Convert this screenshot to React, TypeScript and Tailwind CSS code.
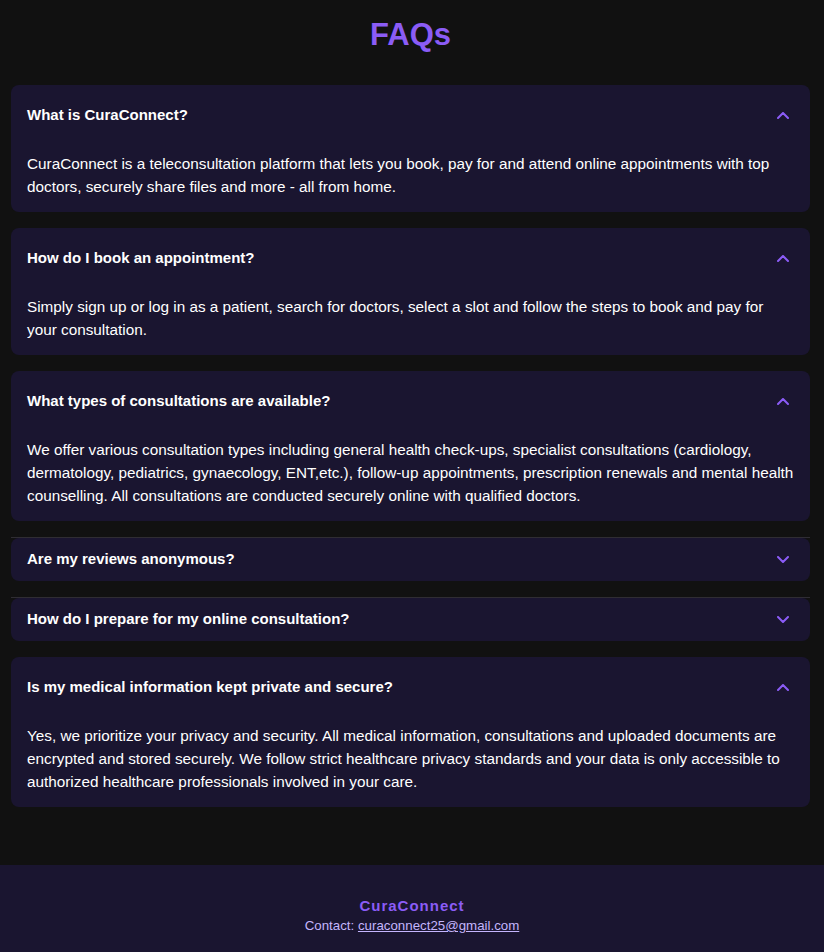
import React from "react";

const faqs = [
  {
    q: "What is CuraConnect?",
    a: "CuraConnect is a teleconsultation platform that lets you book, pay for and attend online appointments with top doctors, securely share files and more - all from home.",
    open: true,
  },
  {
    q: "How do I book an appointment?",
    a: "Simply sign up or log in as a patient, search for doctors, select a slot and follow the steps to book and pay for your consultation.",
    open: true,
  },
  {
    q: "What types of consultations are available?",
    a: "We offer various consultation types including general health check-ups, specialist consultations (cardiology, dermatology, pediatrics, gynaecology, ENT,etc.), follow-up appointments, prescription renewals and mental health counselling. All consultations are conducted securely online with qualified doctors.",
    open: true,
  },
  { q: "Are my reviews anonymous?", a: "", open: false },
  { q: "How do I prepare for my online consultation?", a: "", open: false },
  {
    q: "Is my medical information kept private and secure?",
    a: "Yes, we prioritize your privacy and security. All medical information, consultations and uploaded documents are encrypted and stored securely. We follow strict healthcare privacy standards and your data is only accessible to authorized healthcare professionals involved in your care.",
    open: true,
  },
];

function Chevron({ up }: { up: boolean }) {
  return (
    <svg width="12" height="7" viewBox="0 0 12 7" fill="none" className="shrink-0">
      <path
        d={up ? "M1 6 L6 1 L11 6" : "M1 1 L6 6 L11 1"}
        stroke="#8b5cf6"
        strokeWidth="2"
        strokeLinecap="round"
        strokeLinejoin="round"
      />
    </svg>
  );
}

export default function App() {
  return (
    <div
      className="min-h-screen bg-[#111111] text-white"
      style={{ fontFamily: '"Liberation Sans", Arial, sans-serif' }}
    >
      <main className="pl-[11px] pr-[14px] pt-[17px] pb-[58px]">
        <h1 className="text-center text-[31px] leading-9 font-bold text-[#8b5cf6] mb-[32px]">FAQs</h1>
        <div className="flex flex-col gap-4">
          {faqs.map((f, i) =>
            f.open ? (
              <div key={i} className="rounded-lg bg-[#1a1530]">
                <div className="flex items-center justify-between h-[59px] pt-[2px] pl-4 pr-[21px]">
                  <span className="text-[15px] font-bold">{f.q}</span>
                  <Chevron up />
                </div>
                <p className="px-4 pt-[8px] pb-[14px] text-[15.3px] leading-[23px] text-white">{f.a}</p>
              </div>
            ) : (
              <div key={i} className="flex flex-col">
                <div className="h-px bg-[#2f2d33]" />
                <div className="rounded-lg bg-[#1a1530] flex items-center justify-between h-[43px] pl-4 pr-[21px]">
                  <span className="text-[15px] font-bold">{f.q}</span>
                  <Chevron up={false} />
                </div>
              </div>
            )
          )}
        </div>
      </main>
      <footer className="bg-[#1a1530] pt-[32px] pb-[24px] text-center">
        <div className="text-[15px] leading-[18px] font-bold tracking-[1px] text-[#8b5cf6]">CuraConnect</div>
        <div className="mt-[1px] text-[13.3px] leading-5 text-[#c4b5fd]">
          Contact: <a className="underline" href="#">curaconnect25@gmail.com</a>
        </div>
      </footer>
    </div>
  );
}
